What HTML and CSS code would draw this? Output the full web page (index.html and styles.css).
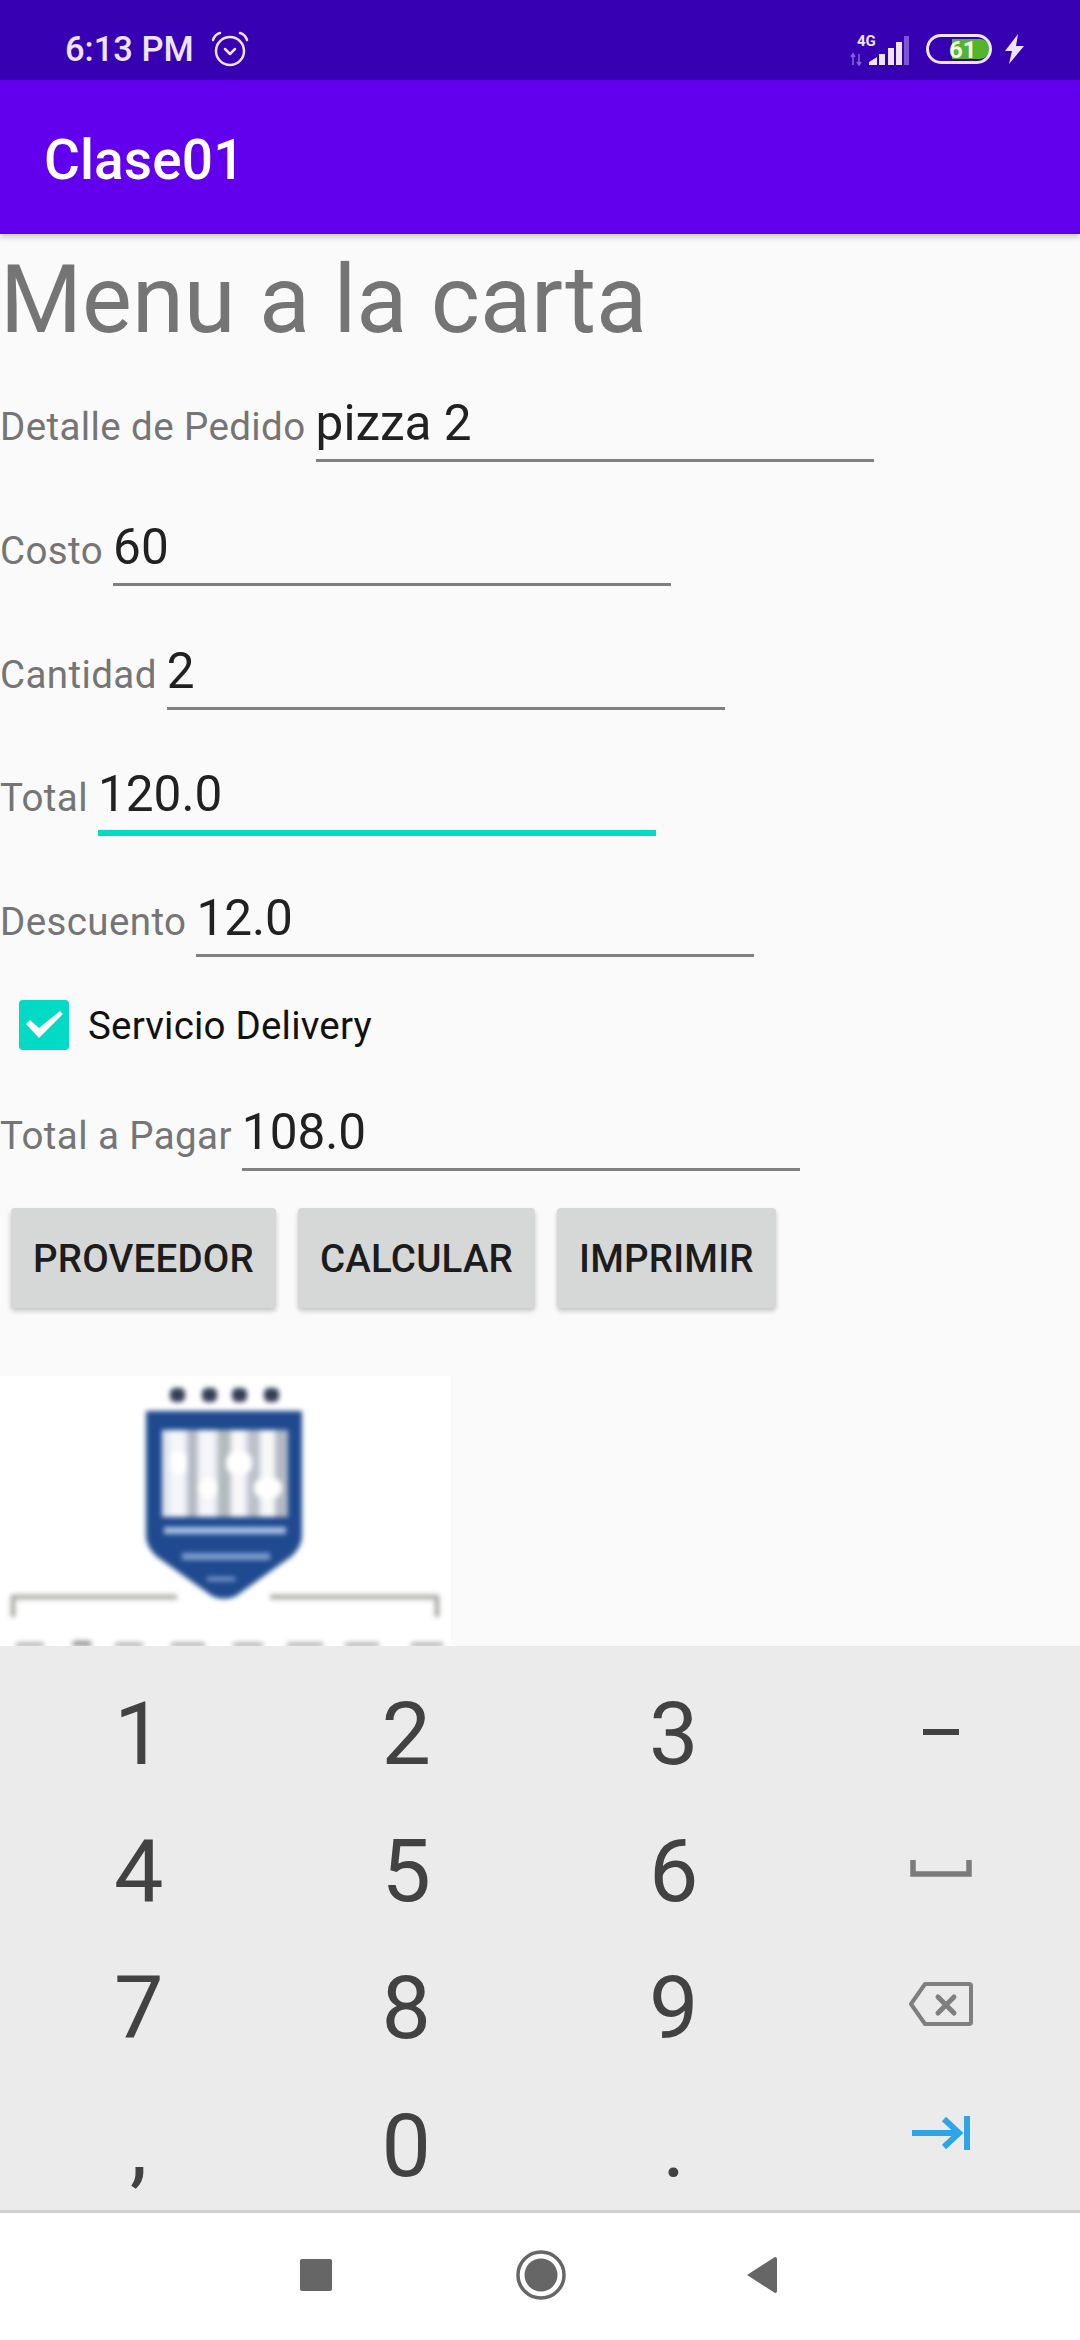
FILE: index.html
```html
<!DOCTYPE html>
<html lang="es">
<head>
<meta charset="utf-8">
<title>Clase01</title>
<link rel="stylesheet" href="styles.css">
</head>
<body>
<div class="phone">
  <header class="status">
    <span class="time">6:13 PM</span>
    <svg class="alarm" width="38" height="36" viewBox="0 0 38 36" fill="none" stroke="#EDE3FB" stroke-width="2.5">
      <circle cx="19" cy="20" r="14"/>
      <path d="M14 18l5 5 5-5" stroke-linecap="round" stroke-linejoin="round"/>
      <path d="M2 9c1-3 3-6 7-7M36 9c-1-3-3-6-7-7" stroke-linecap="round"/>
    </svg>
    <div class="status-right">
      <svg class="signal" width="61" height="34" viewBox="0 0 61 34">
        <text x="8" y="14" class="net">4G</text>
        <path d="M4 22v11M2 25l2-3 2 3M10 33V22M8 30l2 3 2-3" stroke="#8460DC" stroke-width="1.6" fill="none"/>
        <path d="M20 33v-3l8-5v8zM30 33V22h6v11zM39 33V16h6v17zM47 33V10h6v23z" fill="#EDE3FB"/>
        <path d="M55 33V4h5v29z" fill="#7A55D6"/>
      </svg>
      <svg width="66" height="30" viewBox="0 0 66 30">
        <path d="M26 5h28a10 10 0 0 1 0 20H26z" fill="#52B52B"/>
        <rect x="1.5" y="1.5" width="63" height="27" rx="13.5" fill="none" stroke="#EDE3FB" stroke-width="3"/>
        <text x="23" y="24" class="batt">61</text>
      </svg>
      <svg width="19" height="30" viewBox="0 0 19 30">
        <path d="M13 0L0 17h7L4 30 19 12h-8z" fill="#EDE3FB"/>
      </svg>
    </div>
  </header>

  <div class="appbar">Clase01</div>

  <main class="content">
    <h1 class="headline">Menu a la carta</h1>

    <div class="row"><span class="label">Detalle de Pedido</span><div class="field">pizza 2</div></div>
    <div class="row"><span class="label">Costo</span><div class="field">60</div></div>
    <div class="row"><span class="label">Cantidad</span><div class="field">2</div></div>
    <div class="row"><span class="label">Total</span><div class="field field-focus">120.0</div></div>
    <div class="row"><span class="label">Descuento</span><div class="field">12.0</div></div>

    <div class="check-row">
      <span class="checkbox">
        <svg width="50" height="50" viewBox="0 0 50 50"><path d="M7 24l4-4 9 8L41 11l3 3-24 24z" fill="#FAFAFA"/></svg>
      </span>
      <span class="check-label">Servicio Delivery</span>
    </div>

    <div class="row"><span class="label">Total a Pagar</span><div class="field">108.0</div></div>

    <div class="buttons">
      <div class="btn">PROVEEDOR</div>
      <div class="btn">CALCULAR</div>
      <div class="btn">IMPRIMIR</div>
    </div>

    <div class="logo">
      <svg class="logo-art" width="451" height="270" viewBox="0 0 451 270">
        <rect x="170" y="12" width="15" height="14" rx="5" fill="#333D55"/>
        <rect x="202" y="12" width="15" height="14" rx="5" fill="#333D55"/>
        <rect x="232" y="12" width="15" height="14" rx="5" fill="#333D55"/>
        <rect x="264" y="12" width="15" height="14" rx="5" fill="#333D55"/>
        <path d="M146 35h156v125q0 10-10 20l-56 40q-12 6-24 0l-56-40q-10-10-10-20z" fill="#1F4A8F"/>
        <rect x="162" y="54" width="126" height="87" fill="#E2E6EF"/>
        <rect x="170" y="54" width="14" height="87" fill="#F4F6FA"/>
        <rect x="200" y="54" width="14" height="87" fill="#F4F6FA"/>
        <rect x="233" y="54" width="11" height="87" fill="#F8F8F8"/>
        <rect x="262" y="54" width="11" height="87" fill="#F8F8F8"/>
        <rect x="188" y="54" width="9" height="87" fill="#B4B8C0"/>
        <rect x="218" y="54" width="12" height="87" fill="#B3BBBC"/>
        <rect x="248" y="54" width="11" height="87" fill="#BCC0C8"/>
        <rect x="276" y="54" width="12" height="87" fill="#B4B8C4"/>
        <rect x="170" y="75" width="17" height="24" rx="8" fill="#FFF"/>
        <rect x="226" y="75" width="26" height="24" rx="10" fill="#FFF"/>
        <rect x="198" y="102" width="20" height="20" rx="9" fill="#FFF"/>
        <rect x="254" y="102" width="28" height="20" rx="9" fill="#FFF"/>
        <rect x="164" y="151" width="122" height="7" fill="#A8C0E2"/>
        <rect x="182" y="177" width="88" height="7" fill="#7F9ED0"/>
        <rect x="207" y="201" width="28" height="4" fill="#7F9ED0"/>
        <path d="M13 241v-20h164M270 221h167v20" fill="none" stroke="#A6A6A2" stroke-width="4.5"/>
        <g class="logo-blobs">
          <rect x="15" y="267" width="30" height="8" rx="4"/>
          <rect x="72" y="265" width="20" height="10" rx="4"/>
          <rect x="114" y="267" width="30" height="8" rx="4"/>
          <rect x="170" y="267" width="36" height="8" rx="4"/>
          <rect x="232" y="267" width="32" height="8" rx="4"/>
          <rect x="286" y="267" width="38" height="8" rx="4"/>
          <rect x="344" y="267" width="36" height="8" rx="4"/>
          <rect x="410" y="267" width="34" height="8" rx="4"/>
        </g>
      </svg>
    </div>
  </main>

  <section class="keyboard">
    <div class="key key-digit">1</div><div class="key key-digit">2</div><div class="key key-digit">3</div>
    <div class="key"><svg width="36" height="6" viewBox="0 0 36 6"><rect width="36" height="6" fill="#424242"/></svg></div>
    <div class="key key-digit">4</div><div class="key key-digit">5</div><div class="key key-digit">6</div>
    <div class="key"><svg width="62" height="17" viewBox="0 0 62 17"><path d="M3 0v14h56V0" fill="none" stroke="#7B7B7B" stroke-width="5.5"/></svg></div>
    <div class="key key-digit">7</div><div class="key key-digit">8</div><div class="key key-digit">9</div>
    <div class="key key-back"><svg width="64" height="44" viewBox="0 0 64 44"><path d="M16 2h44q2 0 2 2v36q0 2-2 2H16L2 22z" fill="none" stroke="#7F7F7F" stroke-width="4" stroke-linejoin="round"/><path d="M29 15l16 16M45 15L29 31" stroke="#7F7F7F" stroke-width="5" stroke-linecap="round"/></svg></div>
    <div class="key key-digit">,</div><div class="key key-digit">0</div><div class="key key-digit">.</div>
    <div class="key"><svg width="60" height="56" viewBox="0 0 60 56"><path d="M1 17h48M33 3l15 14-15 14" fill="none" stroke="#2DA5E6" stroke-width="6"/><rect x="53" y="0" width="6" height="34" fill="#2DA5E6"/></svg></div>
  </section>

  <nav class="navbar">
    <span class="nav-square"></span>
    <svg width="50" height="50" viewBox="0 0 50 50"><circle cx="25" cy="25" r="23" fill="none" stroke="#666" stroke-width="3.5"/><circle cx="25" cy="25" r="16.5" fill="#666"/></svg>
    <svg width="31" height="38" viewBox="0 0 31 38"><path d="M29 1L1 19l28 18q2 0 2-2V3q0-2-2-2z" fill="#666"/></svg>
  </nav>
</div>
</body>
</html>
```
FILE: styles.css
```css
* { box-sizing: border-box; }
html, body { margin: 0; padding: 0; }
body { width: 1080px; height: 2340px; overflow: hidden; font-family: Roboto, "Liberation Sans", sans-serif; background: #FAFAFA; }
.phone { width: 1080px; height: 2340px; display: flex; flex-direction: column; }

.status { height: 80px; flex: none; background: #3700B3; display: flex; align-items: center; padding: 18px 56px 0 65px; color: #EDE3FB; }
.time { font-size: 34.5px; font-weight: 500; }
.alarm { margin-left: 17px; }
.status-right { margin-left: auto; display: flex; align-items: center; gap: 13px; }
.signal { margin-right: 3px; }
.net { font: 700 15px Roboto, sans-serif; fill: #EDE3FB; }
.batt { font: 700 24px Roboto, sans-serif; fill: #F2F7E8; }

.appbar { height: 154px; flex: none; background: #6200EE; color: #FFF; font-size: 55px; font-weight: 500; line-height: 160px; padding-left: 44px; letter-spacing: .1px; box-shadow: 0 3px 6px rgba(0,0,0,.2); position: relative; z-index: 1; }

.content { flex: 1; min-height: 0; overflow: hidden; background: #FAFAFA; }
.headline { margin: 0; height: 132px; font-size: 94px; font-weight: 400; line-height: 133px; color: #757575; white-space: nowrap; }

.row { height: 123.75px; display: flex; align-items: baseline; padding-top: 20px; }
.label { font-size: 38.5px; letter-spacing: .4px; color: #757575; margin-right: 10px; white-space: nowrap; }
.field { width: 558px; height: 76px; font-size: 49.5px; line-height: 58px; padding-top: 8px; color: #212121; border-bottom: 3px solid #808080; }
.field-focus { height: 79px; border-bottom: 6px solid #03DAC5; }

.check-row { height: 90px; display: flex; align-items: center; padding: 0 0 9px 19px; }
.checkbox { width: 50px; height: 50px; background: #03DAC5; border-radius: 4px; display: block; }
.checkbox svg { display: block; }
.check-label { margin-left: 19px; font-size: 38.5px; letter-spacing: .2px; color: #111; }

.buttons { display: flex; gap: 22px; padding-left: 11px; margin-top: 9px; }
.btn { height: 100px; padding: 0 22px; background: #D6D7D7; border-radius: 4px; box-shadow: 0 3px 5px rgba(0,0,0,.22); color: #1C1C1C; font-size: 38.5px; font-weight: 500; letter-spacing: .2px; line-height: 102px; }

.logo { width: 451px; height: 270px; margin-top: 68px; background: #FFF; overflow: hidden; }
.logo-art { display: block; filter: blur(2.4px); }
.logo-blobs { fill: #8C8C8C; }

.keyboard { height: 564px; flex: none; background: #EBEBEB; display: grid; grid-template-columns: repeat(4, 267.5px); grid-auto-rows: 137.3px; padding: 17px 0 0 5px; }
.key { display: flex; align-items: center; justify-content: center; color: #424242; }
.key-digit { font-size: 88px; line-height: 1; padding-top: 4px; }
.key-back { padding-bottom: 4px; }

.navbar { height: 130px; flex: none; background: #FFF; border-top: 3px solid #CFCFCF; display: flex; align-items: center; padding: 0 0 3px 300px; }
.nav-square { width: 32px; height: 32px; background: #666; border-radius: 2px; }
.navbar svg:nth-of-type(1) { margin-left: 184px; }
.navbar svg:nth-of-type(2) { margin-left: 180px; }
```
